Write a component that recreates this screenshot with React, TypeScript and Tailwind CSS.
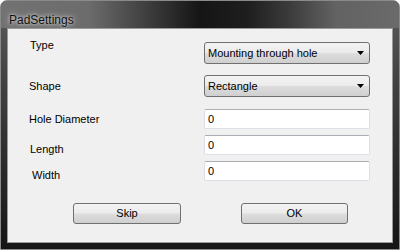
const font = { fontFamily: '"Liberation Sans", Arial, sans-serif' };

function Combo({ value }: { value: string }) {
  return (
    <div className="ml-auto flex h-[22px] w-[166px] items-center justify-between rounded-[3px] border border-[#707070] bg-[linear-gradient(to_bottom,#f3f3f3_0%,#ebebeb_48%,#dddddd_52%,#cfcfcf_100%)] pl-[3px] pr-[5px] text-[11px] text-black">
      <span>{value}</span>
      <svg width="7" height="4" viewBox="0 0 7 4">
        <path d="M0 0 H7 L3.5 4 Z" fill="#000" />
      </svg>
    </div>
  );
}

function TextBox({ value }: { value: string }) {
  return (
    <div className="ml-auto flex h-[20px] w-[166px] items-center rounded-[2px] border border-[#dbdfe6] border-t-[#abadb3] bg-white pl-[3px] text-[11px] text-black">
      {value}
    </div>
  );
}

function Button({ label, className }: { label: string; className: string }) {
  return (
    <button className={"flex h-[21px] items-center justify-center rounded-[3px] border border-[#707070] bg-[linear-gradient(to_bottom,#f3f3f3_0%,#ebebeb_48%,#dddddd_52%,#cfcfcf_100%)] text-[11px] text-black " + className}>
      {label}
    </button>
  );
}

export default function App() {
  return (
    <div className="h-[250px] w-[400px] bg-white" style={font}>
      <div className="flex h-full w-full flex-col rounded-t-[7px] border border-[#8a8a8a] bg-[linear-gradient(to_bottom,#5c5c5c_0%,#3c3c3c_40%,#222222_80%,#151515_100%)]">
        <div className="relative h-[27px] rounded-t-[6px] bg-[linear-gradient(to_right,#727272_0%,#6c6c6c_22%,#3a3a3a_38%,#151515_50%,#1e1e1e_62%,#3a3a3a_72%,#626262_84%,#6a6a6a_100%)] pl-[8px] pt-[6px]">
          <span className="text-[12px] leading-[14px] text-[#111] [text-shadow:0_0_6px_#d8d8d8,0_0_3px_#d8d8d8]">
            PadSettings
          </span>
        </div>
        <div className="mx-[6px] mb-[6px] flex flex-1 flex-col border border-[#9a9a9a] bg-[#f0f0f0] pr-[22px] pt-[10px] text-[11px] text-black">
          <div className="flex h-[36px] items-start">
            <span className="ml-[22px] leading-[13px]">Type</span>
            <div className="ml-auto mt-[3px]">
              <Combo value="Mounting through hole" />
            </div>
          </div>
          <div className="flex h-[34px] items-start">
            <span className="ml-[21px] mt-[5px] leading-[13px]">Shape</span>
            <div className="ml-auto">
              <Combo value="Rectangle" />
            </div>
          </div>
          <div className="flex h-[26px] items-start">
            <span className="ml-[21px] mt-[4px] leading-[13px]">Hole Diameter</span>
            <div className="ml-auto">
              <TextBox value="0" />
            </div>
          </div>
          <div className="flex h-[26px] items-start">
            <span className="ml-[22px] mt-[8px] leading-[13px]">Length</span>
            <div className="ml-auto">
              <TextBox value="0" />
            </div>
          </div>
          <div className="flex h-[42px] items-start">
            <span className="ml-[24px] mt-[8px] leading-[13px]">Width</span>
            <div className="ml-auto">
              <TextBox value="0" />
            </div>
          </div>
          <div className="flex items-start">
            <Button label="Skip" className="ml-[65px] w-[108px]" />
            <Button label="OK" className="ml-[60px] w-[107px]" />
          </div>
        </div>
      </div>
    </div>
  );
}
